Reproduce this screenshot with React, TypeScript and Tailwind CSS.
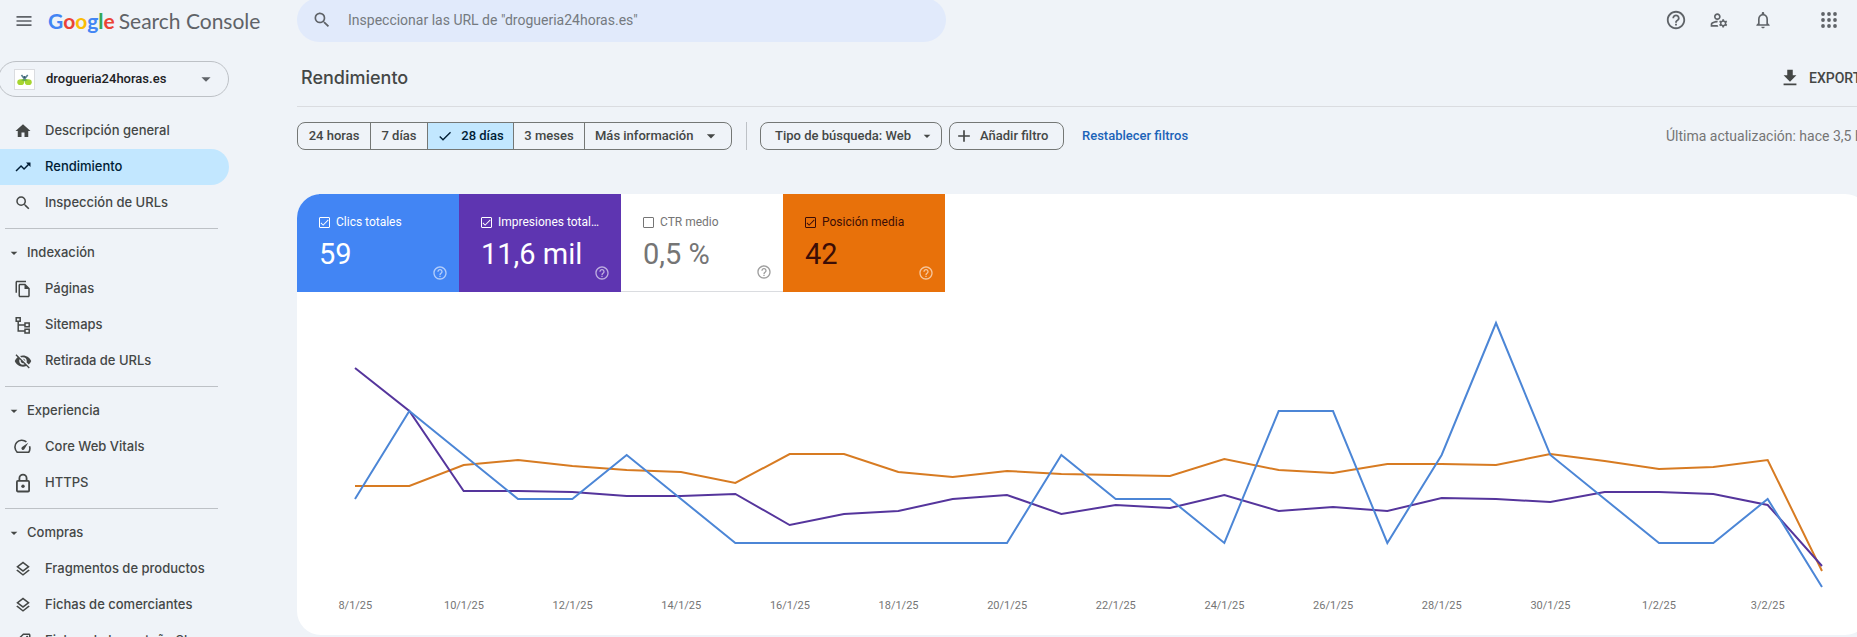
import {
  MdAdd,
  MdArrowDropDown,
  MdCheck,
  MdFileDownload,
  MdHelpOutline,
  MdHome,
  MdMenu,
  MdNotificationsNone,
  MdOutlineFileCopy,
  MdOutlineLayers,
  MdOutlineManageAccounts,
  MdOutlineSell,
  MdSearch,
  MdTrendingUp,
  MdVisibilityOff,
} from "react-icons/md";
import { useState } from "react";
import type { ReactNode } from "react";

interface NavEntry {
  label: string;
  icon: ReactNode;
  active?: boolean;
}
interface NavGroup {
  title?: string;
  entries: NavEntry[];
}
interface Metric {
  label: string;
  value: string;
  checked: boolean;
  tile: string;
  check: string;
  help: string;
}

function SitemapIcon() {
  return (
    <svg viewBox="0 0 18 18" className="size-[18px]" fill="none" stroke="currentColor" strokeWidth="1.5">
      <path d="M2.2 1.7h4v3.6h-4zM11 7h4.2v3.8H11zM11 13.2h4.2V17H11zM4.2 5.3v9.8H11M4.2 9H11" />
    </svg>
  );
}
function GaugeIcon() {
  return (
    <svg viewBox="0 0 18 18" className="size-[18px]" fill="none" stroke="currentColor" strokeWidth="1.6">
      <path d="M12.4 3.9A6.7 6.7 0 0 0 3.3 14.3h11.4a6.7 6.7 0 0 0 .8-6" />
      <path d="M14.3 4.8 10.3 11.3a1.6 1.6 0 1 1-2.3-2.2z" fill="currentColor" stroke="none" />
    </svg>
  );
}
function LockIcon() {
  return (
    <svg viewBox="0 0 18 20" className="h-5 w-[18px]" fill="none" stroke="currentColor" strokeWidth="1.8">
      <rect x="2.9" y="7.9" width="12.2" height="10.6" rx="1" />
      <path d="M5.4 7.5V5.3a3.6 3.6 0 0 1 7.2 0v2.2" />
      <circle cx="9" cy="13.2" r="1.7" fill="currentColor" stroke="none" />
    </svg>
  );
}
function AppsIcon() {
  return (
    <svg viewBox="0 0 16 16" className="size-4" fill="currentColor">
      {[2, 8, 14].map((y) =>
        [2, 8, 14].map((x) => <circle key={`${x}-${y}`} cx={x} cy={y} r="1.9" />)
      )}
    </svg>
  );
}
function SiteIcon() {
  return (
    <svg viewBox="0 0 20 20" className="size-[21px] border border-[#dadce0] bg-white">
      <ellipse cx="6" cy="12.8" rx="3.6" ry="3" fill="#a6d52f" />
      <ellipse cx="14" cy="12.8" rx="3.6" ry="3" fill="#a6d52f" />
      <path d="M6.2 10.4 10 8.6l3.8 1.8L10 12z" fill="#6db33f" />
      <path d="M6.8 5.2 10 9.4l3.4-4.2" fill="none" stroke="#5b8291" strokeWidth="1.7" />
      <circle cx="10" cy="7.4" r="1.2" fill="#33586b" />
    </svg>
  );
}

const groups: NavGroup[] = [
  {
    entries: [
      { label: "Descripción general", icon: <MdHome /> },
      { label: "Rendimiento", icon: <MdTrendingUp />, active: true },
      { label: "Inspección de URLs", icon: <MdSearch /> },
    ],
  },
  {
    title: "Indexación",
    entries: [
      { label: "Páginas", icon: <MdOutlineFileCopy /> },
      { label: "Sitemaps", icon: <SitemapIcon /> },
      { label: "Retirada de URLs", icon: <MdVisibilityOff /> },
    ],
  },
  {
    title: "Experiencia",
    entries: [
      { label: "Core Web Vitals", icon: <GaugeIcon /> },
      { label: "HTTPS", icon: <LockIcon /> },
    ],
  },
  {
    title: "Compras",
    entries: [
      { label: "Fragmentos de productos", icon: <MdOutlineLayers /> },
      { label: "Fichas de comerciantes", icon: <MdOutlineLayers /> },
      { label: "Fichas de la pestaña Sho…", icon: <MdOutlineSell className="-scale-x-100" /> },
    ],
  },
];

const metrics: Metric[] = [
  {
    label: "Clics totales",
    value: "59",
    checked: true,
    tile: "bg-[#4285f4] text-white",
    check: "border-white",
    help: "text-white/60",
  },
  {
    label: "Impresiones totales",
    value: "11,6 mil",
    checked: true,
    tile: "bg-[#5e35b1] text-white",
    check: "border-white",
    help: "text-white/60",
  },
  {
    label: "CTR medio",
    value: "0,5 %",
    checked: false,
    tile: "border-b border-[#dadce0] bg-white text-[#757575]",
    check: "border-[#757575]",
    help: "text-[#9e9e9e]",
  },
  {
    label: "Posición media",
    value: "42",
    checked: true,
    tile: "bg-[#e8710a] text-[#3b0d06]",
    check: "border-[#3b0d06]",
    help: "text-white/60",
  },
];

const clicks = [2, 4, 3, 2, 2, 3, 2, 1, 1, 1, 1, 1, 1, 3, 2, 2, 1, 4, 4, 1, 3, 6, 3, 2, 1, 1, 2, 0];
// heights on the 300 unit plot, measured from its top
const impressions = [
  76, 119, 199, 199, 200, 204, 204, 202, 233, 222, 219, 207, 203, 222, 213, 216, 203, 219, 215, 219,
  206, 207, 210, 200, 200, 202, 213, 274,
];
const position = [
  194, 194, 173, 168, 174, 178, 180, 191, 162, 162, 180, 185, 179, 182, 183, 184, 167, 178, 181, 172,
  172, 173, 162, 169, 177, 175, 168, 279,
];
const days = [
  "8/1/25", "10/1/25", "12/1/25", "14/1/25", "16/1/25", "18/1/25", "20/1/25",
  "22/1/25", "24/1/25", "26/1/25", "28/1/25", "30/1/25", "1/2/25", "3/2/25",
];

const toPoints = (ys: number[]) => ys.map((y, i) => `${i * 10},${y}`).join(" ");

function Chart() {
  const lines = [
    { color: "#d77b22", ys: position },
    { color: "#55359c", ys: impressions },
    { color: "#4c86d6", ys: clicks.map((c) => 295 - c * 44) },
  ];
  return (
    <div>
      <div className="pr-[47px] pl-[58px]">
        <svg viewBox="0 0 270 300" preserveAspectRatio="none" className="h-[300px] w-full overflow-visible">
          {lines.map((line) => (
            <polyline
              key={line.color}
              points={toPoints(line.ys)}
              fill="none"
              stroke={line.color}
              strokeWidth="2"
              vectorEffect="non-scaling-stroke"
            />
          ))}
        </svg>
      </div>
      <div className="grid grid-cols-14 pt-[5px] pr-[47px] pl-1 pb-5 text-center text-[11px] leading-[18px] font-normal text-[#757575]">
        {days.map((day) => (
          <span key={day}>{day}</span>
        ))}
      </div>
    </div>
  );
}

function MetricTile({ metric }: { metric: Metric }) {
  const [checked, setChecked] = useState(metric.checked);
  return (
    <div className={`relative h-[98px] w-[162px] pt-5 pr-5 pl-[22px] font-normal ${metric.tile}`}>
      <label className="flex items-center gap-1.5 text-xs">
        <span className="relative flex size-[11px] shrink-0">
          <input
            type="checkbox"
            checked={checked}
            onChange={() => setChecked(!checked)}
            className={`size-[11px] appearance-none rounded-[1px] border ${metric.check}`}
          />
          {checked && <MdCheck className="pointer-events-none absolute inset-0 size-[11px]" />}
        </span>
        <span className="truncate">{metric.label}</span>
      </label>
      <p className="mt-2 text-[29px] leading-8">{metric.value}</p>
      <button aria-label="Ayuda" className={`absolute right-[11px] bottom-[11px] ${metric.help}`}>
        <MdHelpOutline className="size-4" />
      </button>
    </div>
  );
}

function Sidebar() {
  return (
    <aside className="w-[229px] shrink-0">
      <button className="-ml-0.5 flex h-9 w-[231px] items-center rounded-full border border-[#bdc1c6] pr-[11px] pl-[15px] text-[#202124]">
        <SiteIcon />
        <span className="ml-[11px] flex-1 text-left">drogueria24horas.es</span>
        <MdArrowDropDown className="size-[22px] text-[#5f6368]" />
      </button>
      <nav className="mt-4 font-[Inter,sans-serif]">
        {groups.map((group, i) => (
          <div key={i}>
            {group.title && (
              <>
                <hr className="mt-[7px] mr-[11px] mb-1.5 ml-[5px] border-[#bdc1c6]" />
                <button className="flex h-9 items-center gap-[5px] pl-1.5 text-[#444746]">
                  <MdArrowDropDown className="size-4" />
                  {group.title}
                </button>
              </>
            )}
            {group.entries.map((entry) => (
              <a
                key={entry.label}
                href="#"
                className={`flex h-9 items-center gap-[13px] rounded-r-full pl-3.5 [&_svg]:shrink-0 ${
                  entry.active ? "bg-[#c2e7ff] text-[#001d35]" : "text-[#444746]"
                }`}
              >
                <span className="flex w-[18px] justify-center text-[18px]">{entry.icon}</span>
                <span className="whitespace-nowrap">{entry.label}</span>
              </a>
            ))}
          </div>
        ))}
      </nav>
    </aside>
  );
}

function Filters() {
  return (
    <div className="flex h-7 items-center whitespace-nowrap text-[#444746]">
      <div className="flex h-7 divide-x divide-[#747775] overflow-hidden rounded-lg border border-[#747775]">
        <button className="w-[73px]">24 horas</button>
        <button className="w-[57px]">7 días</button>
        <button className="flex w-[86px] items-center justify-center gap-2 bg-[#c2e7ff] text-[#001d35]">
          <MdCheck className="size-4" />
          28 días
        </button>
        <button className="w-[71px]">3 meses</button>
        <button className="flex w-[146px] items-center justify-between pr-2.5 pl-2.5">
          Más información
          <MdArrowDropDown className="size-5" />
        </button>
      </div>
      <div className="mr-[13px] ml-3.5 h-7 w-px bg-[#bdc1c6]" />
      <button className="flex h-7 w-[182px] items-center justify-between rounded-lg border border-[#747775] pr-1.5 pl-3.5">
        Tipo de búsqueda: Web
        <MdArrowDropDown className="size-4" />
      </button>
      <button className="ml-[7px] flex h-7 w-[115px] items-center gap-1.5 rounded-lg border border-[#747775] pl-1">
        <MdAdd className="size-5" />
        Añadir filtro
      </button>
      <button className="ml-[18px] text-[#1b63b8]">Restablecer filtros</button>
      <span className="ml-auto w-[203px] text-sm font-normal text-[#757575]">
        Última actualización: hace 3,5 horas
      </span>
    </div>
  );
}

export default function App() {
  return (
    <div className="flex h-screen flex-col overflow-hidden bg-[#eff3f8] font-[Roboto,sans-serif] text-[13px] font-medium">
      <header className="flex h-[42px] shrink-0 items-center">
        <div className="flex w-[297px] shrink-0 items-center gap-3.5 pl-3.5">
          <button aria-label="Menú principal" className="text-[#5f6368]">
            <MdMenu className="size-5" />
          </button>
          <a href="#" className="flex items-center gap-1 font-[Lato,sans-serif] text-[21px] font-normal text-[#5f6368]">
            <span className="font-bold">
              <span className="text-[#4285f4]">G</span>
              <span className="text-[#ea4335]">o</span>
              <span className="text-[#fbbc05]">o</span>
              <span className="text-[#4285f4]">g</span>
              <span className="text-[#34a853]">l</span>
              <span className="text-[#ea4335]">e</span>
            </span>
            Search Console
          </a>
        </div>
        <label className="-mt-0.5 flex h-11 w-[649px] items-center gap-4 rounded-full bg-[#e1eafb] pl-[15px]">
          <MdSearch className="size-5 text-[#5f6368]" />
          <input
            type="text"
            aria-label="Inspeccionar URL"
            placeholder={'Inspeccionar las URL de "drogueria24horas.es"'}
            className="flex-1 bg-transparent text-sm font-normal outline-none placeholder:text-[#757a80]"
          />
        </label>
        <div className="ml-auto flex items-center pr-5 pb-0.5 text-[#5f6368]">
          <button aria-label="Ayuda" className="mr-[22px]">
            <MdHelpOutline className="size-[22px]" />
          </button>
          <button aria-label="Usuarios" className="mr-6">
            <MdOutlineManageAccounts className="size-5" />
          </button>
          <button aria-label="Notificaciones" className="mr-12">
            <MdNotificationsNone className="size-5" />
          </button>
          <button aria-label="Aplicaciones">
            <AppsIcon />
          </button>
        </div>
      </header>
      <div className="flex min-h-0 flex-1 gap-[68px]">
        <div className="pt-[19px]">
          <Sidebar />
        </div>
        <main className="-mr-3 min-w-0 flex-1">
          <div className="flex h-[65px] items-center border-b border-[#dadce0] pt-2">
            <h1 className="pl-1 font-[Inter,sans-serif] text-lg text-[#444746]">Rendimiento</h1>
            <button className="ml-auto flex w-[90px] items-center gap-2 text-sm font-medium text-[#444746]">
              <MdFileDownload className="size-[22px] shrink-0" />
              EXPORTAR
            </button>
          </div>
          <div className="pt-[15px] pb-11">
            <Filters />
          </div>
          <section className="overflow-hidden rounded-3xl bg-white">
            <div className="flex">
              {metrics.map((metric) => (
                <MetricTile key={metric.label} metric={metric} />
              ))}
            </div>
            <Chart />
          </section>
        </main>
      </div>
    </div>
  );
}
